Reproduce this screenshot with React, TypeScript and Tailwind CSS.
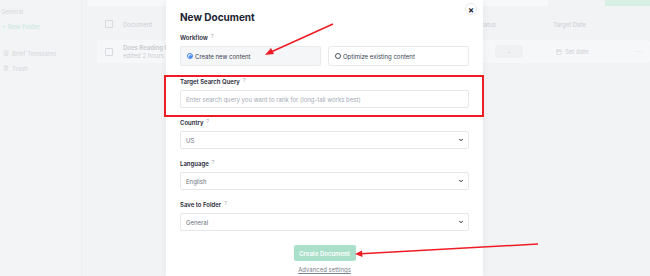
import { ChevronDown, FileText, Trash2, Calendar } from "lucide-react";

const Label = ({ text }: { text: string }) => (
    <div className="flex items-start gap-[3px] h-[10px] leading-[10px] mb-[3px]">
        <span className="text-[6px] font-semibold text-[#1f2937]">{text}</span>
        <span className="text-[5px] leading-[7px] text-[#9ca3af]">?</span>
    </div>
);

const SelectBox = ({ value }: { value: string }) => (
    <div className="h-[18px] rounded-[2px] border border-[#e5e7eb] bg-white flex items-center justify-between pl-[5px] pr-[4px]">
        <span className="text-[6px] text-[#6b7280]">{value}</span>
        <ChevronDown size={6} strokeWidth={4} className="text-[#1f2937]" />
    </div>
);

const App = () => {
    return (
        <div
            className="relative w-[650px] h-[276px] overflow-hidden bg-[#f2f3f5]"
            style={{ fontFamily: "Inter, 'Noto Sans', sans-serif" }}
        >
            {/* Background page (dimmed) */}
            <div className="flex h-full">
                {/* Sidebar */}
                <div className="w-[82px] h-full bg-[#f3f4f6] border-r border-[#eceef1] pt-[7px] text-[6px] text-[#d3d6db]">
                    <div className="pl-[1px] h-[10px] leading-[10px]">General</div>
                    <div className="pl-[2px] mt-[5px] h-[10px] leading-[10px] text-[#c6e7d9]">+ New Folder</div>
                    <div className="pl-[3px] mt-[16px] h-[10px] flex items-center gap-[3px]">
                        <FileText size={6} />
                        <span>Brief Templates</span>
                    </div>
                    <div className="pl-[3px] mt-[5px] h-[10px] flex items-center gap-[3px]">
                        <Trash2 size={6} />
                        <span>Trash</span>
                    </div>
                </div>

                {/* Main */}
                <div className="flex-1 pl-[6px]">
                    <div className="flex h-[6px]">
                        <div className="w-[460px] bg-[#f7f8f9]" />
                        <div className="flex-1" />
                        <div className="w-[45px] bg-[#d8efe5]" />
                    </div>
                    <div className="flex items-center h-[30px] pt-[12px] pb-[6px] text-[6px] text-[#cbcfd5]">
                        <div className="w-[8px] h-[8px] ml-[17px] border border-[#d6d9de] rounded-[1px]" />
                        <span className="ml-[10px] w-[355px]">Document</span>
                        <span className="w-[75px]">Status</span>
                        <span>Target Date</span>
                    </div>
                    <div className="ml-[9px] mt-[4px] h-[23px] bg-[#f6f7f8] rounded-[2px] flex items-center text-[6px] text-[#cbcfd5]">
                        <div className="w-[8px] h-[8px] ml-[8px] border border-[#d6d9de] rounded-[1px]" />
                        <div className="ml-[10px] w-[372px] flex flex-col leading-[8px]">
                            <span className="font-semibold text-[#c6cad0]">Does Reading Improve Your Vocabulary</span>
                            <span>edited 2 hours ago</span>
                        </div>
                        <div className="w-[28px] h-[13px] bg-[#f0f1f3] rounded-[2px] flex items-center justify-center">-</div>
                        <div className="ml-[33px] flex items-center gap-[3px]">
                            <Calendar size={6} />
                            <span>Set date</span>
                        </div>
                        <span className="ml-[48px]">···</span>
                    </div>
                </div>
            </div>

            {/* Modal */}
            <div className="absolute left-[166px] top-0 w-[317px] h-full bg-white shadow-[0_0_8px_rgba(0,0,0,0.06)] px-[14px] pt-[10px]">
                <div className="h-[14px] leading-[14px] text-[10px] font-bold text-[#1b2333]">New Document</div>
                <div className="absolute right-[6px] top-[3px] w-[12px] h-[12px] rounded-full border border-[#e5e7eb] bg-white flex items-center justify-center text-[9px] leading-none font-bold text-[#1f2937]">
                    ×
                </div>

                <div className="mt-[9px]">
                    <Label text="Workflow" />
                    <div className="flex gap-[7px]">
                        <div className="flex-1 h-[20px] rounded-[2px] border border-[#e8eaee] bg-[#f5f6f8] flex items-center pl-[6px] gap-[2px]">
                            <div className="w-[6px] h-[6px] rounded-full border border-[#3b82f6] flex items-center justify-center">
                                <div className="w-[3px] h-[3px] rounded-full bg-[#3b82f6]" />
                            </div>
                            <span className="text-[6px] text-[#374151]">Create new content</span>
                        </div>
                        <div className="flex-1 h-[20px] rounded-[2px] border border-[#e8eaee] bg-white flex items-center pl-[6px] gap-[2px]">
                            <div className="w-[6px] h-[6px] rounded-full border border-[#4b5563]" />
                            <span className="text-[6px] text-[#374151]">Optimize existing content</span>
                        </div>
                    </div>
                </div>

                <div className="mt-[11px]">
                    <Label text="Target Search Query" />
                    <div className="h-[18px] rounded-[2px] border border-[#e5e7eb] flex items-center pl-[5px]">
                        <span className="text-[6px] text-[#a3a9b3]">
                            Enter search query you want to rank for (long-tail works best)
                        </span>
                    </div>
                </div>

                <div className="mt-[10px]">
                    <Label text="Country" />
                    <SelectBox value="US" />
                </div>
                <div className="mt-[10px]">
                    <Label text="Language" />
                    <SelectBox value="English" />
                </div>
                <div className="mt-[10px]">
                    <Label text="Save to Folder" />
                    <SelectBox value="General" />
                </div>

                <div className="flex flex-col items-center mt-[14px]">
                    <div className="w-[62px] h-[16px] rounded-[2px] bg-[#aadfca] flex items-center justify-center text-[6px] font-semibold text-white">
                        Create Document
                    </div>
                    <div className="mt-[4px] h-[10px] leading-[10px] text-[6px] text-[#7b818c] underline">Advanced settings</div>
                </div>
            </div>

            {/* Annotations */}
            <div className="absolute left-[164px] top-[75px] w-[320px] h-[42px] border-2 border-[#ee1c24]" />
            <svg className="absolute inset-0" width="650" height="276" viewBox="0 0 650 276">
                <line x1="333" y1="24" x2="271" y2="52" stroke="#ee1c24" strokeWidth="1.5" />
                <polygon points="265,55 271,48 274,54" fill="#ee1c24" />
                <line x1="538" y1="244" x2="361" y2="253.7" stroke="#ee1c24" strokeWidth="1.5" />
                <polygon points="355,254 362,250.5 362.5,257" fill="#ee1c24" />
            </svg>
        </div>
    );
};

export default App;
